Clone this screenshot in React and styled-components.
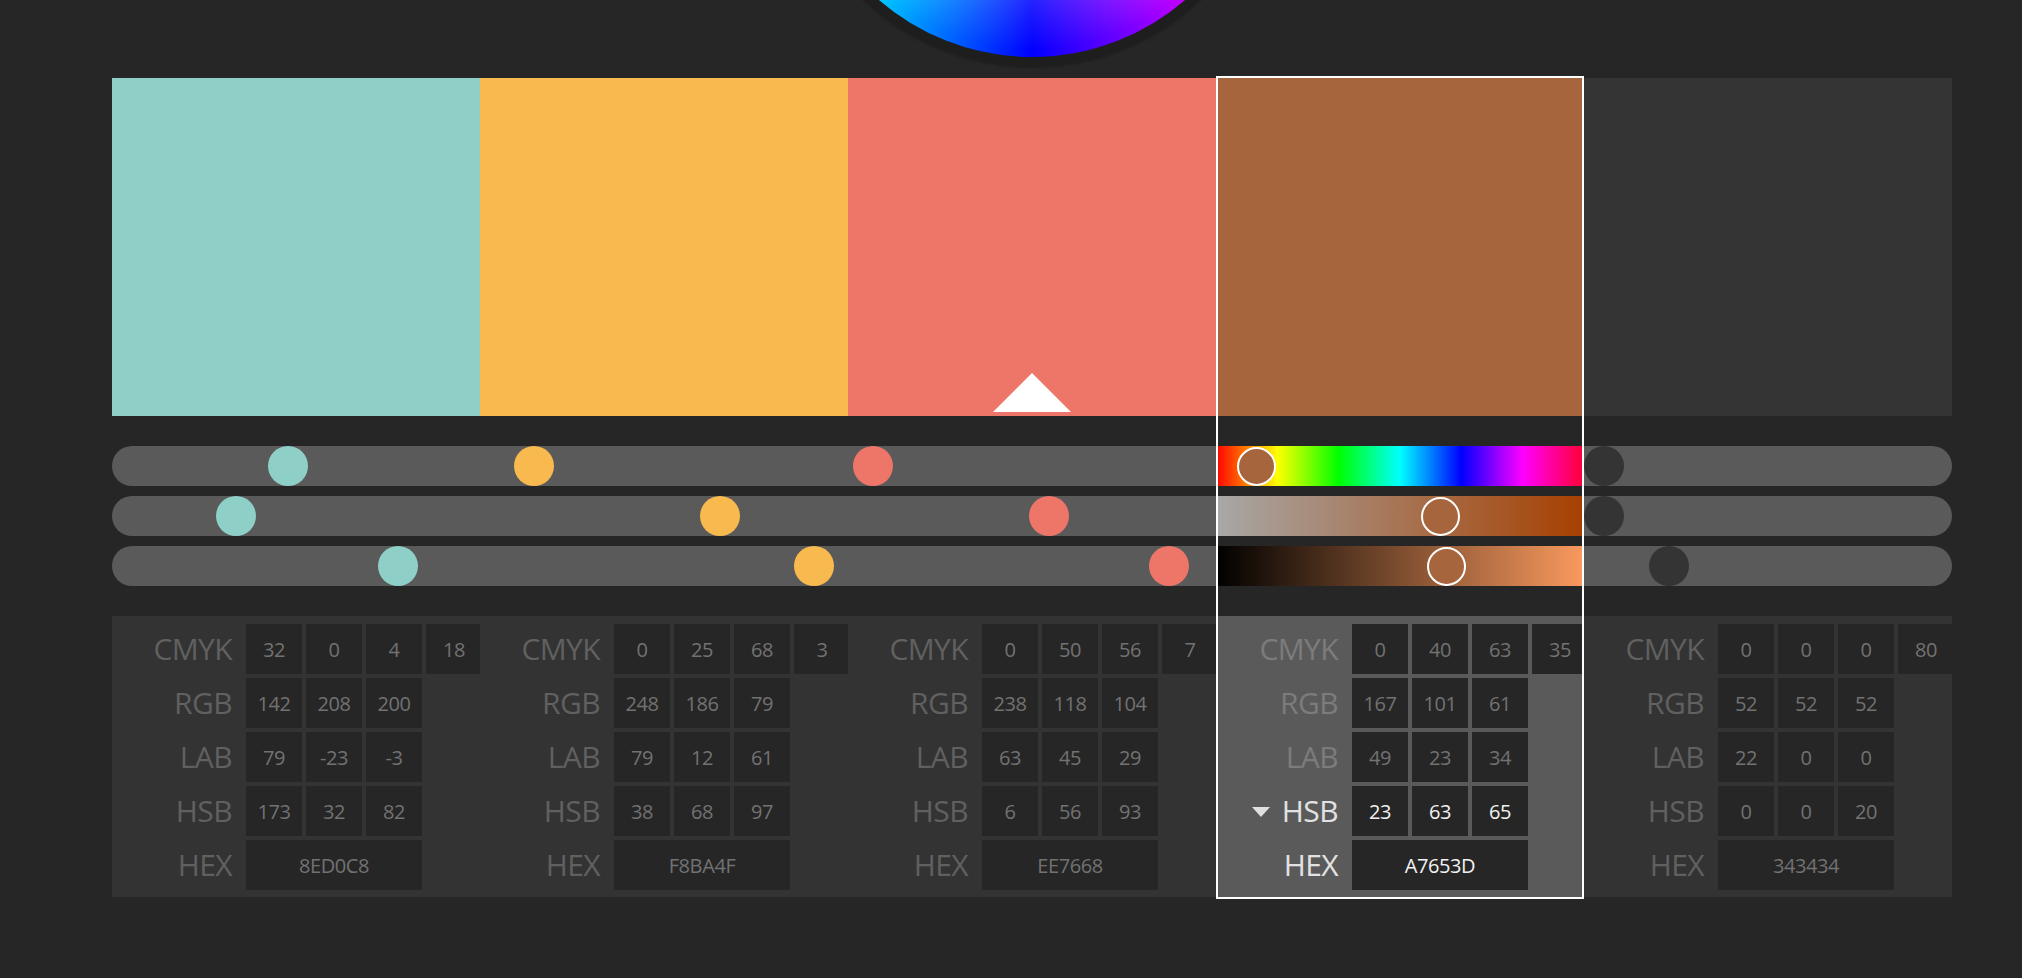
import React from "react";
import styled, { createGlobalStyle } from "styled-components";

const COL_W = 368;
const SELECTED = 3;
const RANGE = COL_W - 44;

const swatches = [
  { hex: "8ED0C8", cmyk: [32, 0, 4, 18], rgb: [142, 208, 200], lab: [79, -23, -3], hsb: [173, 32, 82] },
  { hex: "F8BA4F", cmyk: [0, 25, 68, 3], rgb: [248, 186, 79], lab: [79, 12, 61], hsb: [38, 68, 97] },
  { hex: "EE7668", cmyk: [0, 50, 56, 7], rgb: [238, 118, 104], lab: [63, 45, 29], hsb: [6, 56, 93] },
  { hex: "A7653D", cmyk: [0, 40, 63, 35], rgb: [167, 101, 61], lab: [49, 23, 34], hsb: [23, 63, 65] },
  { hex: "343434", cmyk: [0, 0, 0, 80], rgb: [52, 52, 52], lab: [22, 0, 0], hsb: [0, 0, 20] },
];

const GlobalStyle = createGlobalStyle`
  html, body {
    margin: 0;
    padding: 0;
    background: #262626;
    font-family: "Open Sans", "Noto Sans", sans-serif;
  }
`;

const Page = styled.div`
  width: 2022px;
  height: 978px;
  overflow: hidden;
  background: #262626;
  padding-left: 112px;
  box-sizing: border-box;
`;

const WheelArea = styled.div`
  width: ${COL_W * 5}px;
  height: 76px;
  overflow: hidden;
  display: flex;
  justify-content: center;
  margin-bottom: 2px;
`;

const Wheel = styled.div`
  flex: none;
  width: 468px;
  height: 468px;
  margin-top: -421px;
  border-radius: 50%;
  border: 10px solid #1e1e1e;
  background:
    radial-gradient(circle closest-side, rgba(255,255,255,0.9) 0%, rgba(255,255,255,0.35) 45%, rgba(255,255,255,0.12) 78%, rgba(255,255,255,0) 97%),
    conic-gradient(from 0deg, #ffd000 0deg, #ff5000 40deg, #ff0080 90deg, #c400ff 139deg, #0000ff 180deg, #00c8ff 221deg, #00ff90 270deg, #a0ff00 320deg, #ffd000 360deg);
  box-shadow: 0 0 3px rgba(0,0,0,0.4);
`;

const Board = styled.div`
  position: relative;
  width: ${COL_W * 5}px;
  display: flex;
  flex-direction: column;
  gap: 30px;
`;

const SwatchRow = styled.div`
  display: grid;
  grid-template-columns: repeat(5, ${COL_W}px);
  height: 338px;
`;

const Swatch = styled.div`
  position: relative;
  background: ${(p) => p.$color};
`;

const Pointer = styled.div`
  position: absolute;
  left: 50%;
  bottom: 4px;
  transform: translateX(-50%);
  width: 0;
  height: 0;
  border-left: 39px solid transparent;
  border-right: 39px solid transparent;
  border-bottom: 39px solid #ffffff;
`;

const Sliders = styled.div`
  display: flex;
  flex-direction: column;
  gap: 10px;
`;

const Track = styled.div`
  display: grid;
  grid-template-columns: repeat(5, ${COL_W}px);
  height: 40px;
  border-radius: 20px;
  overflow: hidden;
  background: #5a5a5a;
`;

const Segment = styled.div`
  position: relative;
  background: ${(p) => p.$bg || "transparent"};
`;

const Handle = styled.div`
  position: absolute;
  top: 0;
  width: 40px;
  height: 40px;
  border-radius: 50%;
  box-sizing: border-box;
  background: ${(p) => p.$color};
  ${(p) =>
    p.$active &&
    `
    top: 0.5px;
    width: 39px;
    height: 39px;
    border: 2.5px solid #ffffff;
  `}
`;

const Panel = styled.div`
  display: grid;
  grid-template-columns: repeat(5, ${COL_W}px);
  height: 281px;
  background: #333333;
`;

const InfoCol = styled.div`
  overflow: hidden;
  box-sizing: border-box;
  padding: 8px 0 0 ${(p) => (p.$active ? 2 : 0)}px;
  background: ${(p) => (p.$active ? "#5a5a5a" : "transparent")};
  display: flex;
  flex-direction: column;
  gap: 4px;
`;

const InfoRow = styled.div`
  display: flex;
  align-items: center;
  height: 50px;
`;

const Label = styled.div`
  flex: none;
  width: 120px;
  margin-right: 14px;
  display: flex;
  align-items: center;
  justify-content: flex-end;
  gap: 12px;
  font-size: 30px;
  letter-spacing: -0.6px;
  line-height: 1;
  color: ${(p) => (p.$bright ? "#e2e2e2" : p.$active ? "#7c7c7c" : "#606060")};
`;

const Caret = styled.span`
  width: 0;
  height: 0;
  border-left: 9px solid transparent;
  border-right: 9px solid transparent;
  border-top: 10px solid #e0e0e0;
  margin-top: 2px;
`;

const Cells = styled.div`
  display: flex;
  gap: 4px;
  height: 100%;
`;

const Cell = styled.div`
  flex: none;
  width: ${(p) => (p.$wide ? 176 : 56)}px;
  height: 50px;
  background: #262626;
  display: flex;
  align-items: center;
  justify-content: center;
  font-size: 20px;
  letter-spacing: -0.4px;
  color: ${(p) => (p.$bright ? "#f2f2f2" : "#727272")};
`;

const SelectFrame = styled.div`
  position: absolute;
  top: -2px;
  bottom: -2px;
  left: ${SELECTED * COL_W}px;
  width: ${COL_W}px;
  box-sizing: border-box;
  border: 2px solid #ffffff;
  pointer-events: none;
`;

const tracks = [
  {
    key: "h",
    idx: 0,
    max: 360,
    gradient:
      "linear-gradient(to right, #ff0000 0%, #ffff00 16.7%, #00ff00 33.3%, #00ffff 50%, #0000ff 66.7%, #ff00ff 83.3%, #ff0033 100%)",
  },
  { key: "s", idx: 1, max: 100, gradient: "linear-gradient(to right, #a8a8a8 0%, #a64000 100%)" },
  { key: "b", idx: 2, max: 100, gradient: "linear-gradient(to right, #000000 0%, #fa9a5e 100%)" },
];

function Row({ label, values, active, bright, wide, caret }) {
  return (
    <InfoRow>
      <Label $active={active} $bright={bright}>
        {caret && <Caret />}
        {label}
      </Label>
      <Cells>
        {values.map((v, i) => (
          <Cell key={i} $wide={wide} $bright={bright}>
            {v}
          </Cell>
        ))}
      </Cells>
    </InfoRow>
  );
}

export default function App() {
  return (
    <>
      <GlobalStyle />
      <Page>
        <WheelArea>
          <Wheel />
        </WheelArea>
        <Board>
          <SwatchRow>
            {swatches.map((s, i) => (
              <Swatch key={s.hex} $color={`#${s.hex}`}>
                {i === 2 && <Pointer />}
              </Swatch>
            ))}
          </SwatchRow>
          <Sliders>
            {tracks.map((t) => (
              <Track key={t.key}>
                {swatches.map((s, i) => {
                  const active = i === SELECTED;
                  const v = s.hsb[t.idx] / t.max;
                  return (
                    <Segment key={s.hex} $bg={active ? t.gradient : null}>
                      <Handle
                        $color={`#${s.hex}`}
                        $active={active}
                        style={{ left: `${v * RANGE + (active ? 0.5 : 0)}px` }}
                      />
                    </Segment>
                  );
                })}
              </Track>
            ))}
          </Sliders>
          <Panel>
            {swatches.map((s, i) => {
              const active = i === SELECTED;
              return (
                <InfoCol key={s.hex} $active={active}>
                  <Row label="CMYK" values={s.cmyk} active={active} />
                  <Row label="RGB" values={s.rgb} active={active} />
                  <Row label="LAB" values={s.lab} active={active} />
                  <Row label="HSB" values={s.hsb} active={active} bright={active} caret={active} />
                  <Row label="HEX" values={[s.hex]} active={active} bright={active} wide />
                </InfoCol>
              );
            })}
          </Panel>
          <SelectFrame />
        </Board>
      </Page>
    </>
  );
}
